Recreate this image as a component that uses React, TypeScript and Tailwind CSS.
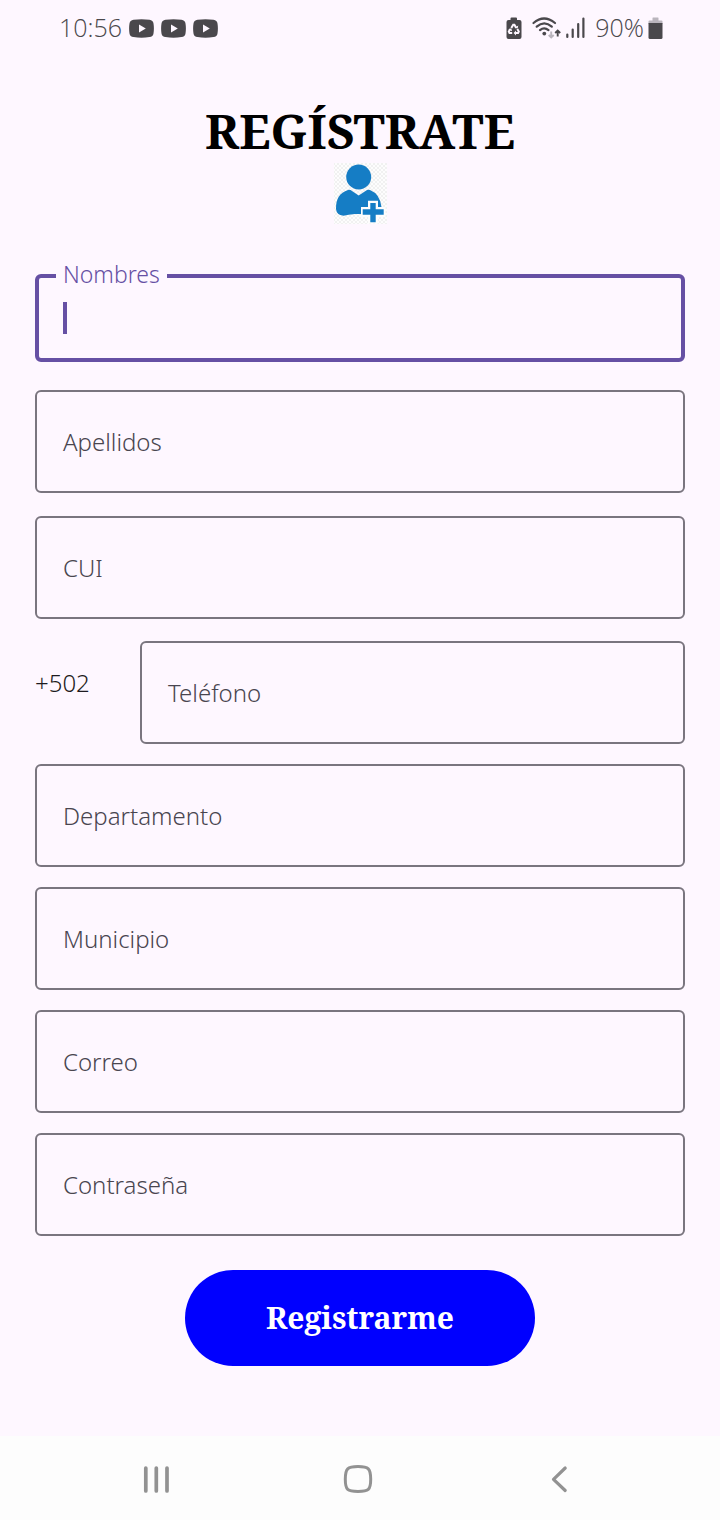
import React from "react";

type FieldProps = {
  id: string;
  label: string;
  type?: string;
};

function YoutubeIcon() {
  return (
    <svg className="h-[19px] w-[25px]" viewBox="0 0 25 19" aria-hidden="true">
      <path
        fill="#4a484c"
        d="M4.5.8Q12.500-.4 20.500.8Q24 1.200 24.500 4.500Q25.300 9.500 24.500 14.500Q24 17.700 20.500 18.100Q12.500 19.200 4.500 18.100Q1 17.700.5 14.500Q-.3 9.500.5 4.500Q1 1.200 4.500.8Z"
      />
      <path fill="#fef7ff" d="M10 5.600v7.800l6.800-3.900z" />
    </svg>
  );
}

function PowerSavingIcon() {
  return (
    <svg className="h-[23px] w-4" viewBox="0 0 16 23" aria-hidden="true">
      <path
        fill="#4a484c"
        d="M4.500 1.500Q4.500.5 5.500.5h4.500q1 0 1 1V3h2.500Q15.500 3 15.500 5v15q0 2-2 2h-11q-2 0-2-2V5q0-2 2-2H4.500Z"
      />
      <g fill="none" stroke="#fef7ff" strokeWidth="2">
        <path d="M5.300 11 7.200 7.700h1.200l1.900 3.300" />
        <path d="M11.300 12l1.500 2.600-.7 1.400H9.500" />
        <path d="M4.300 12l-1.500 2.600.7 1.400h2.700" />
      </g>
      <path fill="#fef7ff" d="M10 13.600v4.800L7.600 16zM8.600 10.700l3 .8.700-3zM2.300 12.500l3-1.200.8 3z" />
    </svg>
  );
}

function WifiIcon() {
  return (
    <svg className="h-[23px] w-[29px]" viewBox="0 0 29 23" aria-hidden="true">
      <g fill="none" stroke="#4a484c" strokeWidth="2.200" strokeLinecap="round">
        <path d="M1.500 6Q12 -3 23 6" />
        <path d="M4.700 9.700Q12.200 3.100 19.800 9.700" />
        <path d="M8 13.100Q12.200 9.500 16.500 13.100" />
      </g>
      <circle cx="12.300" cy="16.600" r="1.900" fill="#4a484c" />
      <path d="M19.200 14.500v6M16.700 18l2.500 2.500 2.500-2.500" fill="none" stroke="#bab5bd" strokeWidth="1.900" />
      <path d="M25.700 19.500v-6M23.200 16l2.500-2.500 2.500 2.500" fill="none" stroke="#4a484c" strokeWidth="1.900" />
    </svg>
  );
}

function SignalIcon() {
  return (
    <svg className="h-[22px] w-5" viewBox="0 0 20 22" aria-hidden="true">
      <path
        d="M2.300 17.500v2.500M7.700 12.500v7.500M13.200 7v13M18.400 1.500v18.500"
        fill="none"
        stroke="#4a484c"
        strokeWidth="2.200"
        strokeLinecap="round"
      />
    </svg>
  );
}

function BatteryIcon() {
  return (
    <svg className="h-[23px] w-[15px]" viewBox="0 0 15 23" aria-hidden="true">
      <path fill="#bab5bd" d="M4.500 1q0-.5.5-.5h5q.5 0 .5.5v2.500h3q1 0 1 1V7H.5V4.500q0-1 1-1h3z" />
      <path fill="#4a484c" d="M.5 6h14v14.500q0 1.500-1.500 1.500H2Q.5 22 .5 20.500Z" />
    </svg>
  );
}

function AddUserIcon() {
  return (
    <svg className="h-[62px] w-[54px]" viewBox="0 0 54 62" aria-hidden="true">
      <defs>
        <pattern id="checks" width="4" height="4" patternUnits="userSpaceOnUse">
          <rect width="4" height="4" fill="#fdfdfd" />
          <rect width="2" height="2" fill="#f1f1f1" />
          <rect x="2" y="2" width="2" height="2" fill="#f1f1f1" />
        </pattern>
      </defs>
      <rect x="1" width="53" height="61" fill="url(#checks)" />
      <circle cx="25.700" cy="14" r="12.500" fill="#157dc5" />
      <path
        fill="#157dc5"
        d="M15 27Q17 26.400 19 28L25.700 32.600L32.500 28Q34.500 26.400 37 27Q47 31 48.500 44V50H35V51H22Q15 51.500 10.500 52.800Q3.500 52 3 46Q2.500 31 15 27Z"
      />
      <path fill="#fdfdfd" d="M35 37.800h10v6.200h7.500v10H45V60.500H35v-6.500h-7v-10h7Z" />
      <path fill="#157dc5" d="M37.300 40h5.400v6.300h8v5.400h-8v7.600h-5.400v-7.600h-7.600v-5.400h7.600Z" />
    </svg>
  );
}

function Field({ id, label, type = "text" }: FieldProps) {
  return (
    <div className="relative grow">
      <input
        id={id}
        type={type}
        className="block h-[103px] w-full rounded-md border-2 border-[#7a757f] bg-transparent px-[26px] text-2xl text-[#1d1b20] outline-none"
      />
      <label
        htmlFor={id}
        className="pointer-events-none absolute inset-y-0 left-7 flex items-center text-2xl text-[#49454f]"
      >
        {label}
      </label>
    </div>
  );
}

function ActiveField({ id, label }: FieldProps) {
  return (
    <div className="relative">
      <input
        id={id}
        type="text"
        className="block h-[88px] w-full rounded-md border-4 border-[#6650a4] bg-transparent px-6 text-2xl text-[#1d1b20] caret-transparent outline-none"
      />
      <label
        htmlFor={id}
        className="absolute -top-4 left-[21px] bg-[#fef7ff] px-[7px] text-[23px] leading-8 text-[#6650a4]"
      >
        {label}
      </label>
      <span className="pointer-events-none absolute top-7 left-7 h-8 w-1 bg-[#6650a4]" />
    </div>
  );
}

export default function App() {
  return (
    <div className="flex min-h-screen flex-col bg-[#fef7ff] font-['Noto_Sans',sans-serif] font-light">
      <header className="flex h-14 items-center justify-between pr-[57px] pl-[59px] font-['Open_Sans','Noto_Sans',sans-serif] text-[25px] font-[350] text-[#4a484c]">
        <div className="flex items-center gap-[7px]">
          <span>10:56</span>
          <YoutubeIcon />
          <YoutubeIcon />
          <YoutubeIcon />
        </div>
        <div className="flex items-center">
          <PowerSavingIcon />
          <span className="ml-2.5 flex items-center gap-1">
            <WifiIcon />
            <SignalIcon />
          </span>
          <span className="ml-2.5">90%</span>
          <span className="ml-1 flex">
            <BatteryIcon />
          </span>
        </div>
      </header>

      <main className="flex grow flex-col px-[35px] pt-[45px]">
        <h1 className="text-center font-['Noto_Serif','Droid_Serif','Liberation_Serif',serif] text-5xl leading-[60px] font-bold text-black">
          REGÍSTRATE
        </h1>
        <div className="flex justify-center pt-0.5">
          <AddUserIcon />
        </div>

        <form className="flex flex-col pt-[49px]" onSubmit={(e) => e.preventDefault()}>
          <ActiveField id="nombres" label="Nombres" />
          <div className="flex flex-col gap-[23px] pt-7">
            <Field id="apellidos" label="Apellidos" />
            <Field id="cui" label="CUI" />
          </div>
          <div className="flex flex-col gap-5 pt-[22px]">
            <div className="flex">
              <span className="w-[105px] pt-[26px] text-2xl text-[#1d1b20]">+502</span>
              <Field id="telefono" label="Teléfono" type="tel" />
            </div>
            <Field id="departamento" label="Departamento" />
            <Field id="municipio" label="Municipio" />
            <Field id="correo" label="Correo" type="email" />
            <Field id="contrasena" label="Contraseña" type="password" />
          </div>
          <button
            type="submit"
            className="mt-[34px] h-24 w-[350px] self-center rounded-full bg-[#0000ff] font-['Noto_Serif','Droid_Serif','Liberation_Serif',serif] text-3xl font-bold text-white"
          >
            Registrarme
          </button>
        </form>
      </main>

      <nav className="flex h-[84px] items-center justify-between bg-[#fdfdfd] pr-[146px] pl-[141px]">
        <button type="button" aria-label="Recientes">
          <svg className="h-[30px] w-[30px]" viewBox="0 0 30 30" aria-hidden="true">
            <path d="M4.800 5v23M15.300 5v23M26 5v23" stroke="#929292" strokeWidth="3.700" strokeLinecap="round" />
          </svg>
        </button>
        <button type="button" aria-label="Inicio">
          <svg className="h-[30px] w-[30px]" viewBox="0 0 30 30" aria-hidden="true">
            <path
              d="M15 3.500C25.500 3.500 27.700 5.500 27.700 16.300S25.500 28.500 15 28.500S2.300 27 2.300 16.300S4.500 3.500 15 3.500Z"
              fill="none"
              stroke="#929292"
              strokeWidth="3"
            />
          </svg>
        </button>
        <button type="button" aria-label="Atrás">
          <svg className="h-[30px] w-[30px]" viewBox="0 0 30 30" aria-hidden="true">
            <path
              d="M21.200 5 9.500 16.300 21.200 27.500"
              fill="none"
              stroke="#929292"
              strokeWidth="3.200"
              strokeLinecap="round"
              strokeLinejoin="round"
            />
          </svg>
        </button>
      </nav>
    </div>
  );
}
